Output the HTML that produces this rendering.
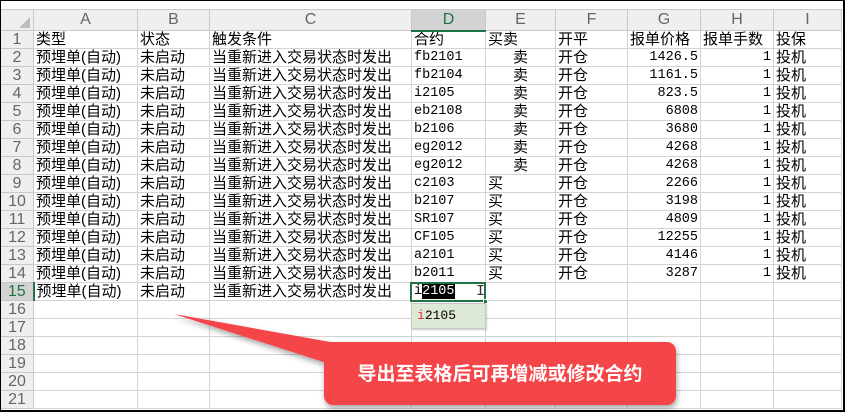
<!DOCTYPE html>
<html><head><meta charset="utf-8"><style>
*{margin:0;padding:0;box-sizing:border-box}
body{width:845px;height:412px;overflow:hidden;background:#fff;position:relative;font-family:"Liberation Sans","Noto Sans CJK SC",sans-serif}
.frame{position:absolute;left:0;top:0;width:845px;height:412px;border:1px solid #000;border-right:2px solid #000;border-bottom:2px solid #000;z-index:10;pointer-events:none}
table{position:absolute;left:0;top:9px;border-collapse:collapse;table-layout:fixed;font-size:15px;color:#000}
td{height:18px;border:1px solid #d4d4d4;white-space:nowrap;overflow:hidden;padding:0 2px;line-height:16px;font-family:"Liberation Sans","Noto Sans CJK SC",sans-serif}
tr.h td{height:21px;background:#efefef;color:#666;text-align:center;font-size:16px;border-color:#c8c8c8}
td.rh{background:#efefef;color:#666;text-align:center;font-size:16px;border-color:#c8c8c8;padding:0}
.m{font-family:"Liberation Mono","Noto Sans CJK SC",monospace;font-size:13.5px}
.r{text-align:right}
.c{text-align:center}
.selh{background:#d3d3d3!important;color:#217346!important;border-bottom:2px solid #217346!important}
.selr{background:#d3d3d3!important;color:#217346!important;border-right:2px solid #217346!important}
</style></head><body>
<table>
<colgroup><col style="width:32px"><col style="width:104px"><col style="width:72px"><col style="width:202px"><col style="width:74px"><col style="width:70px"><col style="width:72px"><col style="width:73px"><col style="width:73px"><col style="width:68px"></colgroup>
<tr class="h"><td style="background:#efefef"><svg width="14" height="14" style="display:block;margin:4px 0 0 14px"><path d="M13 2 L13 13 L2 13 Z" fill="#bdbdbd"/></svg></td><td>A</td><td>B</td><td>C</td><td class="selh">D</td><td>E</td><td>F</td><td>G</td><td>H</td><td>I</td></tr>
<tr><td class="rh">1</td><td>类型</td><td>状态</td><td>触发条件</td><td>合约</td><td>买卖</td><td>开平</td><td>报单价格</td><td>报单手数</td><td>投保</td></tr>
<tr><td class="rh">2</td><td>预埋单(自动)</td><td>未启动</td><td>当重新进入交易状态时发出</td><td class="m">fb2101</td><td class="c">卖</td><td>开仓</td><td class="r m">1426.5</td><td class="r m">1</td><td>投机</td></tr>
<tr><td class="rh">3</td><td>预埋单(自动)</td><td>未启动</td><td>当重新进入交易状态时发出</td><td class="m">fb2104</td><td class="c">卖</td><td>开仓</td><td class="r m">1161.5</td><td class="r m">1</td><td>投机</td></tr>
<tr><td class="rh">4</td><td>预埋单(自动)</td><td>未启动</td><td>当重新进入交易状态时发出</td><td class="m">i2105</td><td class="c">卖</td><td>开仓</td><td class="r m">823.5</td><td class="r m">1</td><td>投机</td></tr>
<tr><td class="rh">5</td><td>预埋单(自动)</td><td>未启动</td><td>当重新进入交易状态时发出</td><td class="m">eb2108</td><td class="c">卖</td><td>开仓</td><td class="r m">6808</td><td class="r m">1</td><td>投机</td></tr>
<tr><td class="rh">6</td><td>预埋单(自动)</td><td>未启动</td><td>当重新进入交易状态时发出</td><td class="m">b2106</td><td class="c">卖</td><td>开仓</td><td class="r m">3680</td><td class="r m">1</td><td>投机</td></tr>
<tr><td class="rh">7</td><td>预埋单(自动)</td><td>未启动</td><td>当重新进入交易状态时发出</td><td class="m">eg2012</td><td class="c">卖</td><td>开仓</td><td class="r m">4268</td><td class="r m">1</td><td>投机</td></tr>
<tr><td class="rh">8</td><td>预埋单(自动)</td><td>未启动</td><td>当重新进入交易状态时发出</td><td class="m">eg2012</td><td class="c">卖</td><td>开仓</td><td class="r m">4268</td><td class="r m">1</td><td>投机</td></tr>
<tr><td class="rh">9</td><td>预埋单(自动)</td><td>未启动</td><td>当重新进入交易状态时发出</td><td class="m">c2103</td><td>买</td><td>开仓</td><td class="r m">2266</td><td class="r m">1</td><td>投机</td></tr>
<tr><td class="rh">10</td><td>预埋单(自动)</td><td>未启动</td><td>当重新进入交易状态时发出</td><td class="m">b2107</td><td>买</td><td>开仓</td><td class="r m">3198</td><td class="r m">1</td><td>投机</td></tr>
<tr><td class="rh">11</td><td>预埋单(自动)</td><td>未启动</td><td>当重新进入交易状态时发出</td><td class="m">SR107</td><td>买</td><td>开仓</td><td class="r m">4809</td><td class="r m">1</td><td>投机</td></tr>
<tr><td class="rh">12</td><td>预埋单(自动)</td><td>未启动</td><td>当重新进入交易状态时发出</td><td class="m">CF105</td><td>买</td><td>开仓</td><td class="r m">12255</td><td class="r m">1</td><td>投机</td></tr>
<tr><td class="rh">13</td><td>预埋单(自动)</td><td>未启动</td><td>当重新进入交易状态时发出</td><td class="m">a2101</td><td>买</td><td>开仓</td><td class="r m">4146</td><td class="r m">1</td><td>投机</td></tr>
<tr><td class="rh">14</td><td>预埋单(自动)</td><td>未启动</td><td>当重新进入交易状态时发出</td><td class="m">b2011</td><td>买</td><td>开仓</td><td class="r m">3287</td><td class="r m">1</td><td>投机</td></tr>
<tr><td class="rh selr">15</td><td>预埋单(自动)</td><td>未启动</td><td>当重新进入交易状态时发出</td><td></td><td></td><td></td><td></td><td></td><td></td></tr>
<tr><td class="rh">16</td><td></td><td></td><td></td><td></td><td></td><td></td><td></td><td></td><td></td></tr>
<tr><td class="rh">17</td><td></td><td></td><td></td><td></td><td></td><td></td><td></td><td></td><td></td></tr>
<tr><td class="rh">18</td><td></td><td></td><td></td><td></td><td></td><td></td><td></td><td></td><td></td></tr>
<tr><td class="rh">19</td><td></td><td></td><td></td><td></td><td></td><td></td><td></td><td></td><td></td></tr>
<tr><td class="rh">20</td><td></td><td></td><td></td><td></td><td></td><td></td><td></td><td></td><td></td></tr>
<tr><td class="rh">21</td><td></td><td></td><td></td><td></td><td></td><td></td><td></td><td></td><td></td></tr>
</table>
<div style="position:absolute;left:410px;top:282px;width:76px;height:20px;border:2px solid #217346;background:#fff;font-family:'Liberation Mono',monospace;font-size:13.5px;line-height:16px;padding-left:2px">i<span style="background:#000;color:#fff">2105</span><span style="position:absolute;left:64px;top:0;font-size:15px;color:#333">I</span></div>
<div style="position:absolute;left:483px;top:299px;width:5px;height:5px;background:#217346;border:1px solid #fff"></div>
<div style="position:absolute;left:411px;top:303px;width:75px;height:26px;background:#dde9d4;border:1px solid #c6c6c6;box-shadow:1px 1px 2px rgba(0,0,0,.2);font-family:'Liberation Mono',monospace;font-size:13px;line-height:24px;padding-left:5px"><span style="color:#d33">i</span>2105</div>
<svg style="position:absolute;left:0;top:0" width="845" height="412">
<defs><filter id="s" x="-10%" y="-10%" width="130%" height="140%"><feDropShadow dx="1" dy="3" stdDeviation="3" flood-color="#000" flood-opacity="0.35"/></filter></defs>
<g filter="url(#s)" fill="#f44449">
<polygon points="174,314 336,343 336,366"/>
<rect x="324" y="342" width="352" height="63" rx="9"/>
</g>
<text x="500" y="380" text-anchor="middle" fill="#fff" font-size="19" font-weight="bold" font-family="Liberation Sans,Noto Sans CJK SC,sans-serif">导出至表格后可再增减或修改合约</text>
</svg>
<div class="frame"></div>
</body></html>
